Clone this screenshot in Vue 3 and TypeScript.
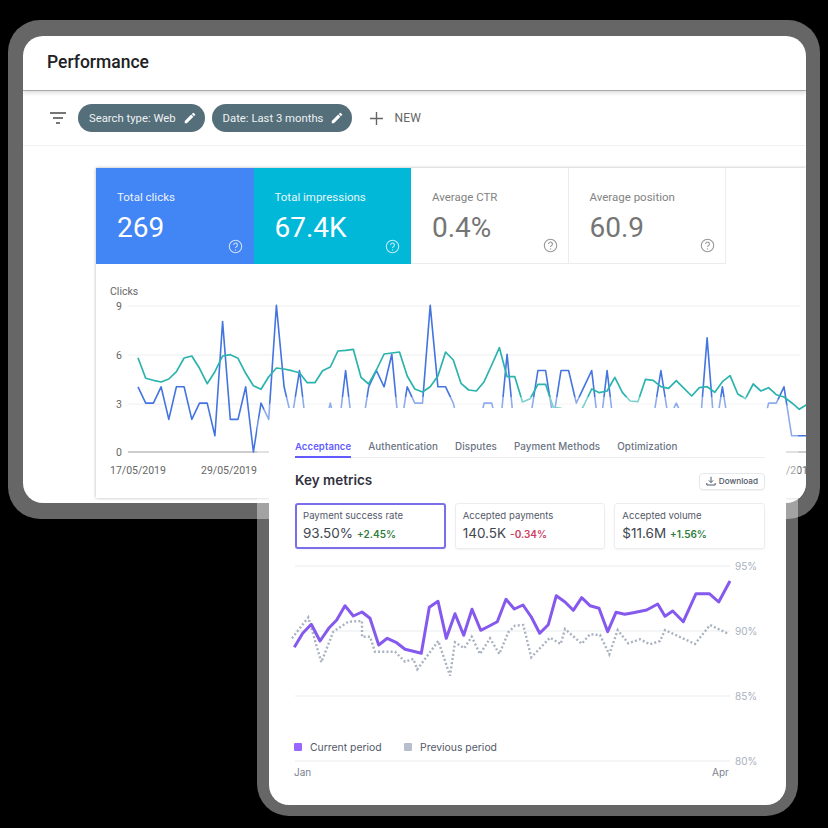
<template>
  <div class="canvas">
    <section class="frame frame-back">
      <div class="sheet">
        <header class="title-bar">Performance</header>
        <div class="toolbar">
          <svg class="filter-icon" width="18" height="12" viewBox="0 0 18 12">
            <path d="M1 1h16M4 6h10M7 11h4" stroke="#4a4a4a" stroke-width="1.6" fill="none" />
          </svg>
          <span v-for="chip in chips" :key="chip" class="chip">
            {{ chip }}
            <svg width="14" height="14" viewBox="0 0 24 24">
              <path fill="#fff" d="M3 17.25V21h3.75L17.8 9.94l-3.75-3.75L3 17.25zM20.7 7.04a1 1 0 0 0 0-1.41l-2.34-2.34a1 1 0 0 0-1.41 0l-1.83 1.83 3.75 3.75 1.83-1.83z" />
            </svg>
          </span>
          <span class="new-btn">
            <svg width="15" height="15" viewBox="0 0 15 15">
              <path d="M7.5 1v13M1 7.5h13" stroke="#666" stroke-width="1.4" fill="none" />
            </svg>
            NEW
          </span>
        </div>
        <div class="report">
          <div class="report-card">
            <div class="tiles">
              <div v-for="tile in tiles" :key="tile.label" class="tile" :class="tile.kind">
                <div class="tile-label">{{ tile.label }}</div>
                <div class="tile-value">{{ tile.value }}</div>
                <svg class="help" width="15" height="15" viewBox="0 0 15 15">
                  <circle cx="7.5" cy="7.5" r="6.2" fill="none" stroke="currentColor" stroke-width="1.1" />
                  <path d="M5.6 6a1.9 1.9 0 1 1 2.9 1.6c-.6.4-1 .7-1 1.5" fill="none" stroke="currentColor" stroke-width="1.1" />
                  <circle cx="7.5" cy="10.9" r=".7" fill="currentColor" />
                </svg>
              </div>
            </div>
            <div class="clicks-label">Clicks</div>
            <svg class="clicks-chart" viewBox="96 300 710 190" width="710" height="190">
              <line v-for="y in [306, 355, 404]" :key="y" x1="128" x2="800" :y1="y" :y2="y" stroke="#eeeeee" />
              <line x1="128" x2="806" y1="452" y2="452" stroke="#bdbdbd" stroke-width="1.5" />
              <text v-for="t in clickTicks" :key="t.label" class="axis" x="116" :y="t.y + 4">{{ t.label }}</text>
              <text v-for="d in dateTicks" :key="d.x" class="axis" :x="d.x" y="474">{{ d.label }}</text>
              <polyline :points="bluePoints" fill="none" stroke="#4374e0" stroke-width="1.6" stroke-linejoin="round" />
              <polyline :points="tealPoints" fill="none" stroke="#2bb3ae" stroke-width="1.7" stroke-linejoin="round" />
            </svg>
          </div>
        </div>
      </div>
    </section>

    <section class="frame frame-front">
      <div class="sheet sheet-front">
        <nav class="tabs">
          <span v-for="(tab, i) in tabs" :key="tab" class="tab" :class="{ active: i === 0 }">{{ tab }}</span>
        </nav>
        <div class="metrics-head">
          <h2>Key metrics</h2>
          <span class="download">
            <svg width="10" height="10" viewBox="0 0 10 10">
              <path d="M5 .8v5.6M2.8 4.4 5 6.6l2.2-2.2M.8 7v2h8.4V7" fill="none" stroke="#4f5666" stroke-width="1" />
            </svg>
            Download
          </span>
        </div>
        <div class="metrics">
          <div v-for="(m, i) in metrics" :key="m.label" class="metric" :class="{ selected: i === 0 }">
            <div class="metric-label">{{ m.label }}</div>
            <div class="metric-row">
              <span class="metric-value">{{ m.value }}</span>
              <span class="metric-delta" :class="m.delta[0] === '+' ? 'up' : 'down'">{{ m.delta }}</span>
            </div>
          </div>
        </div>
        <svg class="rate-chart" viewBox="285 555 490 230" width="490" height="230">
          <line v-for="t in rateTicks" :key="t.y" x1="295" x2="730" :y1="t.y" :y2="t.y" stroke="#e9ebef" />
          <text v-for="t in rateTicks" :key="t.label" class="rate-axis" x="735" :y="t.y + 4">{{ t.label }}</text>
          <polyline :points="previousLine" fill="none" stroke="#a9b2c0" stroke-width="2.4" stroke-dasharray="2 2.2" />
          <polyline :points="currentLine" fill="none" stroke="#8659ee" stroke-width="3" stroke-linejoin="round" />
          <rect x="294" y="743" width="8" height="8" rx="1" fill="#9966ff" />
          <text class="legend" x="310" y="751">Current period</text>
          <rect x="404" y="743" width="8" height="8" rx="1" fill="#b6c0cd" />
          <text class="legend" x="420" y="751">Previous period</text>
          <text class="month" x="294" y="776">Jan</text>
          <text class="month" x="712" y="776">Apr</text>
        </svg>
      </div>
    </section>
  </div>
</template>

<script setup lang="ts">
const chips = ['Search type: Web', 'Date: Last 3 months']

const tiles = [
  { label: 'Total clicks', value: '269', kind: 'blue' },
  { label: 'Total impressions', value: '67.4K', kind: 'cyan' },
  { label: 'Average CTR', value: '0.4%', kind: 'plain' },
  { label: 'Average position', value: '60.9', kind: 'plain' },
]

const clickTicks = [
  { label: '9', y: 306 },
  { label: '6', y: 355 },
  { label: '3', y: 404 },
  { label: '0', y: 452 },
]

const dateTicks = [
  { label: '17/05/2019', x: 110 },
  { label: '29/05/2019', x: 201 },
  { label: '22/07/2019', x: 758 },
]

// daily clicks, one value per day
const clicks = [
  4, 3, 3, 4, 2, 4, 4, 2, 3, 3, 1, 8, 2, 2, 4, 0, 3, 2, 9, 4, 2, 5, 1, 1, 1, 3, 1, 5, 1, 1, 4, 5, 4, 6, 1, 4, 3, 3, 9, 4,
  4, 3, 1, 1, 1, 3, 3, 1, 6, 1, 1, 2, 5, 5, 2, 5, 5, 3, 4, 5, 1, 5, 1, 1, 1, 1, 1, 2, 5, 2, 3, 2, 1, 1, 7, 1, 4, 1, 1, 1,
  1, 1, 3, 3, 4, 1, 1, 1,
]

// impressions, already scaled to the chart's y
const impressions = [
  357.7, 378.3, 380.3, 382, 379, 371.7, 358, 356, 368.3, 383.7, 371.7, 356, 354.7, 358.3, 373.3, 385.7, 389.3, 376.7,
  368, 369, 370.7, 372.7, 382.7, 382.7, 370.7, 367, 351, 350.3, 349.3, 377.3, 384, 370, 354, 353, 352, 376, 389, 392,
  386.7, 376, 352, 360, 383.3, 390, 391, 381.7, 365, 347.7, 376.7, 376.7, 402, 398.7, 384.3, 384.3, 407.3, 408.3,
  416.7, 420, 405, 389, 392.7, 391, 377.3, 392.7, 401, 401.7, 379.3, 380.3, 386.7, 388.3, 380.7, 388.3, 396, 387.7,
  386.7, 392.3, 381.7, 375.7, 394, 398.7, 384, 391, 387.7, 394.7, 397, 402.7, 409.3, 404.3,
]

const dayX = (i: number) => (138 + 7.69 * i).toFixed(1)
const bluePoints = clicks.map((v, i) => `${dayX(i)},${(452 - v * 16.3).toFixed(1)}`).join(' ')
const tealPoints = impressions.map((y, i) => `${dayX(i)},${y}`).join(' ')

const tabs = ['Acceptance', 'Authentication', 'Disputes', 'Payment Methods', 'Optimization']

const metrics = [
  { label: 'Payment success rate', value: '93.50%', delta: '+2.45%' },
  { label: 'Accepted payments', value: '140.5K', delta: '-0.34%' },
  { label: 'Accepted volume', value: '$11.6M', delta: '+1.56%' },
]

const rateTicks = [
  { label: '95%', y: 566 },
  { label: '90%', y: 631 },
  { label: '85%', y: 696 },
  { label: '80%', y: 761 },
]

const currentLine =
  '294.3,647.3 302.7,633.3 311.3,624.3 320,641 328.7,628.3 336.7,620 345,605.7 353.3,616 362,612 370,618.3 378.7,645 ' +
  '387.3,638.3 396,642.3 405,649.3 413.3,651.3 421.3,653.3 429.3,607.3 438,601.3 446.3,638.3 455,613.7 463.7,635.3 ' +
  '472,609.3 480.7,630.3 489.3,626 497.3,621.7 506,599.3 514.3,609 523,605 531.3,617 539.7,633.3 548.3,624.7 ' +
  '556.3,595.7 565,602 573.3,610.3 581.7,597.7 590,605.7 599,608.3 607.7,631.7 616,612.3 624.7,614.3 633.3,612.7 ' +
  '646.7,610 657.7,604 665,616.3 672.7,611 683.3,621.7 696,593.7 709.3,593.7 718.7,602 730,581'

const previousLine =
  '292,638.3 308.3,617.3 321.3,662.3 333.3,631.7 348.3,621.7 362,621 362,636.7 370,636.7 375,651.7 395,651.7 405,661.7 ' +
  '413.3,659 417.3,669.3 438.3,641 450,675.7 455,642.3 464.3,648.3 471.7,636.7 480,654 490,638.3 499.3,654 508.3,632.3 ' +
  '515,625.7 523.3,625 531.3,657.3 550,637.7 560.7,644 565,629 581.7,643.7 590,634.3 600,635 609.3,654.3 617.7,630 ' +
  '628.3,643.3 640,639.3 650,644.3 660,641 665,630 695,644 710,625 727.3,633.3'
</script>

<style>
html,
body {
  background: #000;
}
</style>

<style scoped>
.canvas {
  position: relative;
  width: 828px;
  height: 828px;
  overflow: hidden;
  background: #000;
}
.frame {
  position: absolute;
  box-sizing: border-box;
  background: rgba(255, 255, 255, 0.4);
  border-radius: 32px;
}
.frame-back {
  left: 8px;
  top: 20px;
  width: 812px;
  height: 499px;
  padding: 16px 14px 16px 15px;
  font-family: Roboto, 'Liberation Sans', sans-serif;
}
.frame-front {
  left: 257px;
  top: 397px;
  width: 541px;
  height: 419px;
  padding: 11px 12px;
  font-family: Inter, 'Liberation Sans', sans-serif;
}
.sheet {
  height: 100%;
  background: #fff;
  border-radius: 20px;
  overflow: hidden;
  display: flex;
  flex-direction: column;
}
.title-bar {
  flex: none;
  box-sizing: border-box;
  height: 55px;
  padding: 16px 24px 0;
  font-size: 17.5px;
  font-weight: 500;
  color: #202124;
  border-bottom: 1px solid #a8a8a8;
  box-shadow: 0 2px 4px rgba(0, 0, 0, 0.14);
  position: relative;
}
.toolbar {
  flex: none;
  box-sizing: border-box;
  height: 55px;
  display: flex;
  align-items: center;
  gap: 7px;
  padding: 0 0 0 26px;
  border-bottom: 1px solid #f0f0f0;
}
.filter-icon {
  margin-right: 4px;
}
.chip {
  display: flex;
  align-items: center;
  gap: 7px;
  height: 28px;
  padding: 0 8px 0 11px;
  border-radius: 14px;
  background: #546e7a;
  color: #eef2f3;
  font-size: 11.3px;
}
.new-btn {
  display: flex;
  align-items: center;
  gap: 10px;
  margin-left: 10px;
  color: #666;
  font-size: 12px;
  letter-spacing: 0.2px;
}
.report {
  flex: 1;
  padding: 22px 0 5px 73px;
  min-height: 0;
}
.report-card {
  height: 100%;
  background: #fff;
  box-shadow: 0 0 3px rgba(0, 0, 0, 0.3);
}
.tiles {
  display: flex;
  height: 96px;
}
.tile {
  position: relative;
  box-sizing: border-box;
  width: 157.5px;
  padding: 22px 0 0 21px;
  color: #757575;
  border-right: 1px solid #ececec;
  border-bottom: 1px solid #ececec;
}
.tile.blue {
  background: #4285f4;
  color: #fff;
  border: 0;
}
.tile.cyan {
  background: #02b8d9;
  color: #fff;
  border: 0;
}
.tile-label {
  font-size: 11.5px;
  line-height: 14px;
  opacity: 0.9;
}
.tile-value {
  margin-top: 7px;
  font-size: 28px;
  line-height: 34px;
}
.help {
  position: absolute;
  right: 11px;
  bottom: 10px;
  opacity: 0.75;
}
.tile.plain .help {
  right: 10px;
}
.clicks-label {
  padding: 21px 0 0 14px;
  font-size: 10.5px;
  line-height: 14px;
  height: 36px;
  box-sizing: border-box;
  color: #666;
}
.clicks-chart {
  display: block;
}
.axis {
  font-size: 10.5px;
  fill: #666;
}
.tabs {
  display: flex;
  gap: 17px;
  margin: 31px 21px 0 26px;
  border-bottom: 1px solid #ebedf0;
  flex: none;
}
.tab {
  padding-bottom: 4px;
  margin-bottom: -1px;
  font-size: 9.8px;
  line-height: 15px;
  font-weight: 500;
  color: #6a7383;
  letter-spacing: 0.1px;
}
.tab.active {
  color: #635bff;
  font-size: 9.5px;
  font-weight: 600;
  border-bottom: 2px solid #635bff;
  padding-bottom: 2px;
}
.metrics-head {
  flex: none;
  display: flex;
  align-items: center;
  justify-content: space-between;
  margin: 13px 21px 0 26px;
  height: 18px;
}
.metrics-head h2 {
  margin: 0;
  font-size: 13.5px;
  font-weight: 600;
  color: #30313d;
}
.download {
  display: flex;
  align-items: center;
  gap: 3px;
  height: 17px;
  margin-top: 2px;
  box-sizing: border-box;
  padding: 0 6px;
  border: 1px solid #e6e8ec;
  border-radius: 4px;
  font-size: 8.2px;
  font-weight: 500;
  color: #4f5666;
  box-shadow: 0 1px 1px rgba(0, 0, 0, 0.06);
}
.metrics {
  flex: none;
  display: flex;
  gap: 9px;
  margin: 14px 21px 0 26px;
}
.metric {
  flex: 1;
  box-sizing: border-box;
  height: 46px;
  padding: 5px 7px;
  border: 1px solid #ebedf0;
  border-radius: 3px;
  box-shadow: 0 1px 2px rgba(0, 0, 0, 0.05);
}
.metric.selected {
  border: 2px solid #7a6fe8;
  padding: 4px 6px;
}
.metric-label {
  font-size: 9.6px;
  line-height: 13px;
  color: #545969;
}
.metric-row {
  display: flex;
  align-items: baseline;
  gap: 4px;
  margin-top: 3px;
}
.metric-value {
  font-size: 13.5px;
  line-height: 17px;
  color: #424650;
}
.metric-delta {
  font-size: 10px;
  font-weight: 600;
}
.metric-delta.up {
  color: #2f7d3b;
}
.metric-delta.down {
  color: #cd3d64;
}
.rate-chart {
  display: block;
  flex: none;
  margin: 6px 0 0 16px;
}
.rate-axis {
  font-size: 10px;
  fill: #a9b0bc;
}
.legend {
  font-size: 10.4px;
  fill: #545969;
}
.month {
  font-size: 10px;
  fill: #7b8290;
}
</style>
